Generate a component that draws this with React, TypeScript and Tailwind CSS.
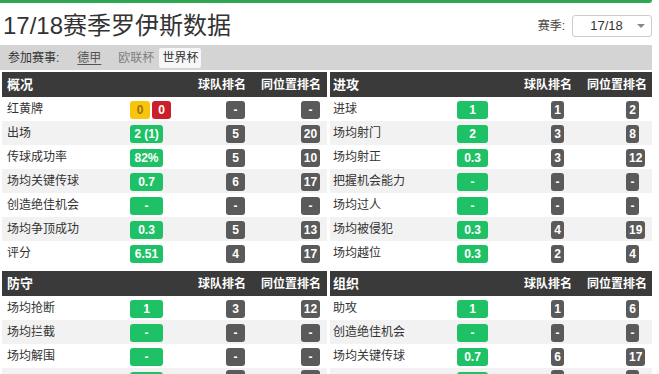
import React from "react"

type Row = {
  label: string
  value: string
  team: string
  pos: string
  cards?: [string, string]
}

type SectionProps = {
  title: string
  rows: Row[]
  side: "left" | "right"
}

const overview: Row[] = [
  { label: "红黄牌", value: "", team: "-", pos: "-", cards: ["0", "0"] },
  { label: "出场", value: "2 (1)", team: "5", pos: "20" },
  { label: "传球成功率", value: "82%", team: "5", pos: "10" },
  { label: "场均关键传球", value: "0.7", team: "6", pos: "17" },
  { label: "创造绝佳机会", value: "-", team: "-", pos: "-" },
  { label: "场均争顶成功", value: "0.3", team: "5", pos: "13" },
  { label: "评分", value: "6.51", team: "4", pos: "17" },
]

const attack: Row[] = [
  { label: "进球", value: "1", team: "1", pos: "2" },
  { label: "场均射门", value: "2", team: "3", pos: "8" },
  { label: "场均射正", value: "0.3", team: "3", pos: "12" },
  { label: "把握机会能力", value: "-", team: "-", pos: "-" },
  { label: "场均过人", value: "-", team: "-", pos: "-" },
  { label: "场均被侵犯", value: "0.3", team: "4", pos: "19" },
  { label: "场均越位", value: "0.3", team: "2", pos: "4" },
]

// last row is only a sliver at the bottom of the window
const defence: Row[] = [
  { label: "场均抢断", value: "1", team: "3", pos: "12" },
  { label: "场均拦截", value: "-", team: "-", pos: "-" },
  { label: "场均解围", value: "-", team: "-", pos: "-" },
  { label: "", value: "", team: "", pos: "" },
]

const organise: Row[] = [
  { label: "助攻", value: "1", team: "1", pos: "6" },
  { label: "创造绝佳机会", value: "-", team: "-", pos: "-" },
  { label: "场均关键传球", value: "0.7", team: "6", pos: "17" },
  { label: "", value: "", team: "", pos: "" },
]

function RankBadge({ text, fixed }: { text: string; fixed: boolean }) {
  return (
    <span
      className={
        "inline-flex h-[18px] items-center justify-center rounded-[3px] bg-[#5a5a5a] text-[12px] font-bold text-white " +
        (fixed ? "w-[19px]" : "min-w-[13px] px-[3px]")
      }
    >
      {text}
    </span>
  )
}

function Section({ title, rows, side }: SectionProps) {
  const isLeft = side === "left"
  return (
    <div>
      <div
        className={
          "flex h-[25px] items-center bg-[#3a3a3a] text-[12px] font-bold text-white " +
          (isLeft ? "pl-[5px] pr-[6px]" : "pl-[3px] pr-[5px]")
        }
      >
        <span className="flex-1 text-[13px]">{title}</span>
        <span>球队排名</span>
        <span className="ml-[15px]">同位置排名</span>
      </div>
      {rows.map((row, i) => (
        <div
          key={row.label + i}
          className={"flex h-6 items-center text-[12px] text-[#333] " + (i % 2 === 1 ? "bg-[#f2f2f2]" : "bg-white")}
        >
          <span className={isLeft ? "w-[128px] pl-[5px]" : "w-[127px] pl-[3px]"}>{row.label}</span>
          <span className={"flex gap-[2px] pt-[2px] " + (isLeft ? "w-[96px]" : "w-[94px]")}>
            {row.cards ? (
              <>
                <span className="inline-flex h-[18px] w-[20px] items-center justify-center rounded-[3px] bg-[#f8c40c] text-[12px] font-bold text-[#9a7308]">
                  {row.cards[0]}
                </span>
                <span className="inline-flex h-[18px] w-[19px] items-center justify-center rounded-[3px] bg-[#cc1f2b] text-[12px] font-bold text-white">
                  {row.cards[1]}
                </span>
              </>
            ) : (
              <span
                className={
                  "inline-flex h-[18px] items-center justify-center rounded-[3px] bg-[#1fc166] text-[12px] font-bold text-white " +
                  (isLeft ? "w-[33px]" : "w-[31px]")
                }
              >
                {row.value}
              </span>
            )}
          </span>
          <span className="w-[75px] pt-[2px]">
            <RankBadge text={row.team} fixed={isLeft} />
          </span>
          <span className="flex-1 pt-[2px]">
            <RankBadge text={row.pos} fixed={isLeft} />
          </span>
        </div>
      ))}
    </div>
  )
}

export default function App() {
  return (
    <div className="h-[374px] w-[659px] overflow-hidden bg-white font-['Liberation_Sans','Noto_Sans_CJK_SC',sans-serif] text-[#333]">
      <div className="h-[3px] w-[652px] rounded-br-[4px] bg-[#2fa652]" />
      <div className="flex h-[42px] w-[652px] items-center justify-between pl-[3px]">
        <h1 className="pt-[3px] text-[24px] font-normal leading-none text-[#333]">17/18赛季罗伊斯数据</h1>
        <div className="flex items-center pt-[4px]">
          <span className="mr-[7px] text-[12px] text-[#444]">赛季:</span>
          <div className="flex h-[22px] w-[80px] items-center rounded-[3px] border border-[#ccc] bg-white">
            <span className="flex-1 pl-[6px] text-center text-[13px] text-[#333]">17/18</span>
            <svg width="14" height="10" viewBox="0 0 14 10" className="mr-[3px]">
              <path d="M3 3h8l-4 4z" fill="#888" />
            </svg>
          </div>
        </div>
      </div>
      <div className="flex h-[25px] w-[652px] items-center bg-[#d4d4d4] pl-[8px] text-[12px]">
        <span className="text-[#333]">参加赛事:</span>
        <span className="ml-[18px] text-[#555] underline underline-offset-2">德甲</span>
        <span className="ml-[17px] text-[#808080]">欧联杯</span>
        <span className="ml-[5px] rounded-[2px] bg-[#f7f7f7] px-[3px] py-[1px] text-[#333]">世界杯</span>
      </div>
      <div className="mt-[2px] grid w-[652px] grid-cols-[325px_322px] gap-x-[3px] gap-y-[6px] pl-[2px]">
        <Section title="概况" rows={overview} side="left" />
        <Section title="进攻" rows={attack} side="right" />
        <Section title="防守" rows={defence} side="left" />
        <Section title="组织" rows={organise} side="right" />
      </div>
    </div>
  )
}
